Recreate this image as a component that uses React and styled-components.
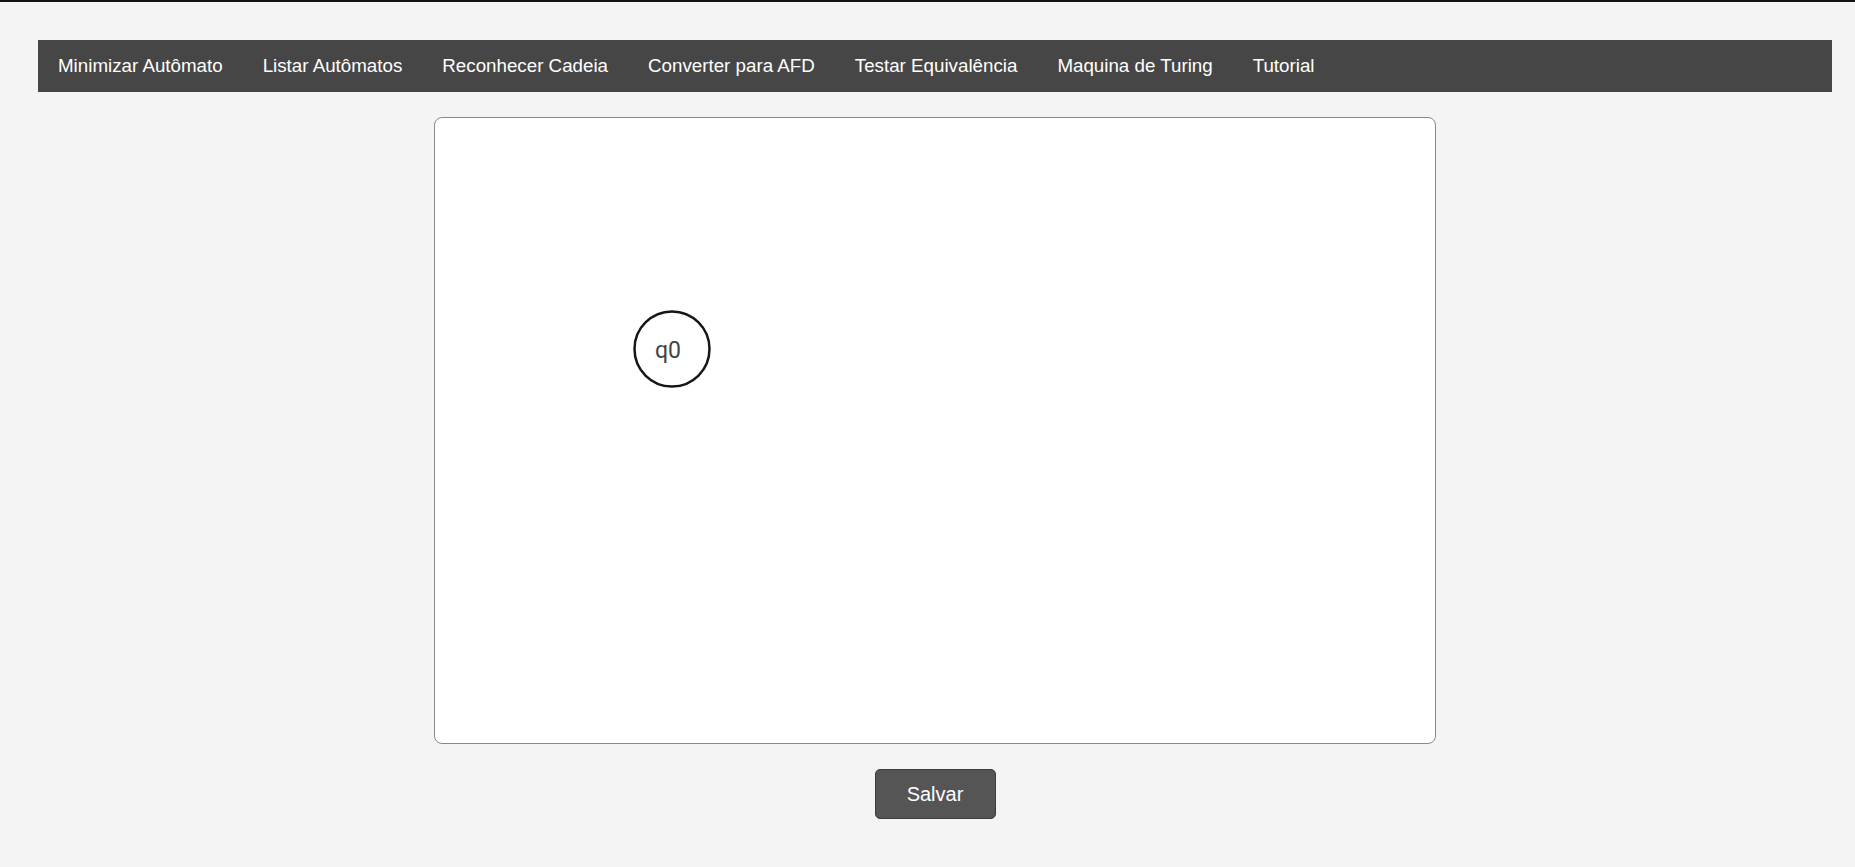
import React from "react";
import styled, { createGlobalStyle } from "styled-components";

const GlobalStyle = createGlobalStyle`
  html, body {
    margin: 0;
    padding: 0;
    background: #f4f4f4;
    font-family: "Liberation Sans", Arial, sans-serif;
  }
  * { box-sizing: border-box; }
`;

const TopLine = styled.div`
  height: 2px;
  background: #131116;
`;

const Page = styled.div`
  display: flex;
  flex-direction: column;
  align-items: center;
  padding: 38px 23px 48px 38px;
`;

const NavBar = styled.nav`
  align-self: stretch;
  display: flex;
  align-items: center;
  height: 52px;
  background: #464646;
`;

const NavLink = styled.a`
  display: flex;
  align-items: center;
  height: 100%;
  padding: 0 20px;
  color: #ffffff;
  font-size: 18.75px;
  text-decoration: none;
  white-space: nowrap;
  cursor: pointer;
`;

const Canvas = styled.div`
  margin-top: 25px;
  width: 1002px;
  height: 627px;
  background: #ffffff;
  border: 1px solid #888888;
  border-radius: 8px;
  overflow: hidden;
`;

const Drawing = styled.svg`
  display: block;
  width: 100%;
  height: 100%;
`;

const SaveButton = styled.button`
  margin-top: 25px;
  width: 121px;
  height: 50px;
  background: #555555;
  border: 1px solid #3c3c3c;
  border-radius: 5px;
  color: #ffffff;
  font-family: "Liberation Sans", Arial, sans-serif;
  font-size: 20px;
  cursor: pointer;
`;

const links = [
  "Minimizar Autômato",
  "Listar Autômatos",
  "Reconhecer Cadeia",
  "Converter para AFD",
  "Testar Equivalência",
  "Maquina de Turing",
  "Tutorial",
];

const states = [{ id: "q0", x: 237, y: 231 }];

export default function App() {
  return (
    <>
      <GlobalStyle />
      <TopLine />
      <Page>
        <NavBar>
          {links.map((l) => (
            <NavLink key={l}>{l}</NavLink>
          ))}
        </NavBar>
        <Canvas>
          <Drawing viewBox="0 0 1000 625">
            {states.map((s) => (
              <g key={s.id}>
                <circle
                  cx={s.x}
                  cy={s.y}
                  r="37.5"
                  fill="#ffffff"
                  stroke="#161616"
                  strokeWidth="2.5"
                />
                <text
                  x={s.x - 4}
                  y={s.y + 1}
                  textAnchor="middle"
                  dominantBaseline="central"
                  fontFamily="Roboto, 'Liberation Sans', sans-serif"
                  fontSize="23"
                  fill="#444444"
                >
                  {s.id}
                </text>
              </g>
            ))}
          </Drawing>
        </Canvas>
        <SaveButton>Salvar</SaveButton>
      </Page>
    </>
  );
}
